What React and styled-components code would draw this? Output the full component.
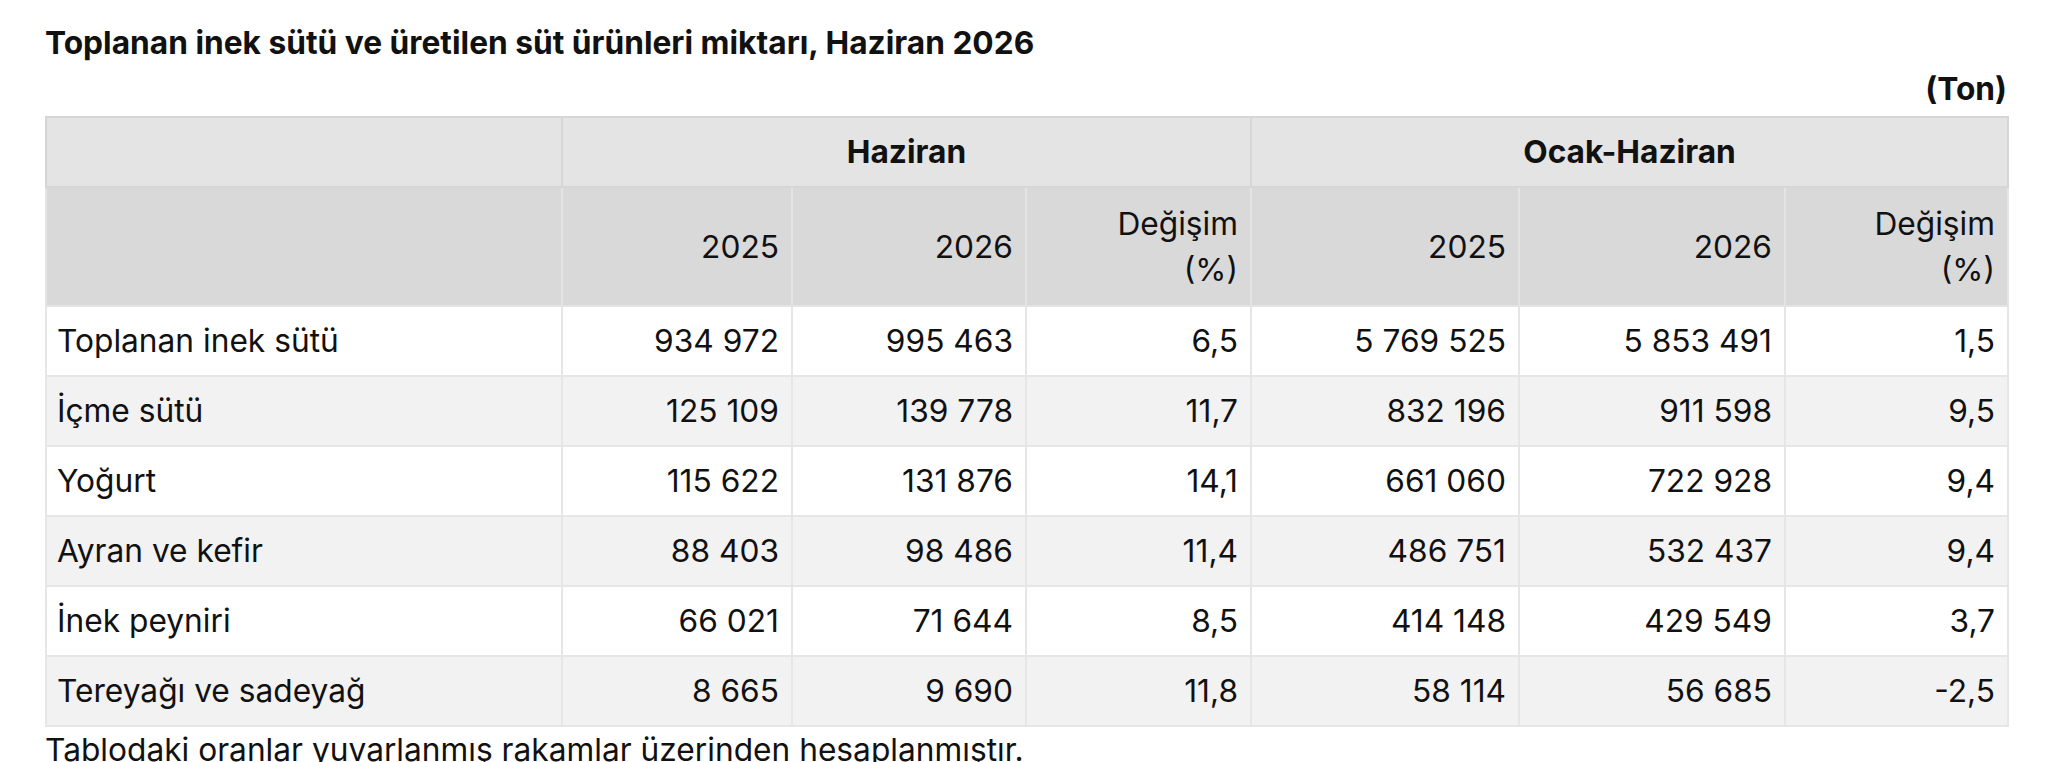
import React from 'react';
import styled, { createGlobalStyle } from 'styled-components';

const GlobalStyle = createGlobalStyle`
  html, body { margin: 0; padding: 0; background: #ffffff; }
  body {
    font-family: Inter, "Noto Sans", "Liberation Sans", sans-serif;
    color: #111111;
  }
`;

const Page = styled.div`
  padding: 20px 53px 0 45px;
  width: 1962px;
`;

const Title = styled.h1`
  margin: 0;
  font-size: 31.7px;
  line-height: 46px;
  font-weight: 700;
  color: #111111;
`;

const Unit = styled.div`
  text-align: right;
  font-size: 31.7px;
  line-height: 46px;
  font-weight: 700;
  margin-bottom: 4px;
`;

const Table = styled.table`
  width: 1962px;
  border-collapse: collapse;
  table-layout: fixed;
  font-size: 31.7px;
  line-height: 46px;
`;

const GroupCell = styled.th`
  background: #e4e4e4;
  font-weight: 700;
  text-align: center;
  padding: 11px 12px;
  border: 2px solid #d6d6d6;
`;

const SubCell = styled.th`
  background: #d9d9d9;
  font-weight: 400;
  text-align: right;
  padding: 12.5px 12px;
  border: 2px solid #e4e4e4;
  border-top-color: #d6d6d6;
`;

const Row = styled.tr`
  background: ${(p) => (p.$alt ? '#f2f2f2' : '#ffffff')};
`;

const Cell = styled.td`
  padding: 11px 12px 11px ${(p) => (p.$label ? '10px' : '12px')};
  border: 2px solid #e6e6e6;
  text-align: ${(p) => (p.$label ? 'left' : 'right')};
  white-space: nowrap;
`;

const Note = styled.p`
  margin: 0;
  font-size: 31.7px;
  line-height: 46px;
`;

const widths = [516, 230, 234, 225, 268, 266, 223];

const rows = [
  ['Toplanan inek sütü', '934 972', '995 463', '6,5', '5 769 525', '5 853 491', '1,5'],
  ['İçme sütü', '125 109', '139 778', '11,7', '832 196', '911 598', '9,5'],
  ['Yoğurt', '115 622', '131 876', '14,1', '661 060', '722 928', '9,4'],
  ['Ayran ve kefir', '88 403', '98 486', '11,4', '486 751', '532 437', '9,4'],
  ['İnek peyniri', '66 021', '71 644', '8,5', '414 148', '429 549', '3,7'],
  ['Tereyağı ve sadeyağ', '8 665', '9 690', '11,8', '58 114', '56 685', '-2,5'],
];

export default function App() {
  return (
    <>
      <GlobalStyle />
      <Page>
        <Title>Toplanan inek sütü ve üretilen süt ürünleri miktarı, Haziran 2026</Title>
        <Unit>(Ton)</Unit>
        <Table>
          <colgroup>
            {widths.map((w, i) => (
              <col key={i} style={{ width: w }} />
            ))}
          </colgroup>
          <thead>
            <tr>
              <GroupCell />
              <GroupCell colSpan={3}>Haziran</GroupCell>
              <GroupCell colSpan={3}>Ocak-Haziran</GroupCell>
            </tr>
            <tr>
              <SubCell />
              <SubCell>2025</SubCell>
              <SubCell>2026</SubCell>
              <SubCell>
                Değişim
                <br />
                (%)
              </SubCell>
              <SubCell>2025</SubCell>
              <SubCell>2026</SubCell>
              <SubCell>
                Değişim
                <br />
                (%)
              </SubCell>
            </tr>
          </thead>
          <tbody>
            {rows.map((r, i) => (
              <Row key={r[0]} $alt={i % 2 === 1}>
                {r.map((v, j) => (
                  <Cell key={j} $label={j === 0}>
                    {v}
                  </Cell>
                ))}
              </Row>
            ))}
          </tbody>
        </Table>
        <Note>Tablodaki oranlar yuvarlanmış rakamlar üzerinden hesaplanmıştır.</Note>
      </Page>
    </>
  );
}
